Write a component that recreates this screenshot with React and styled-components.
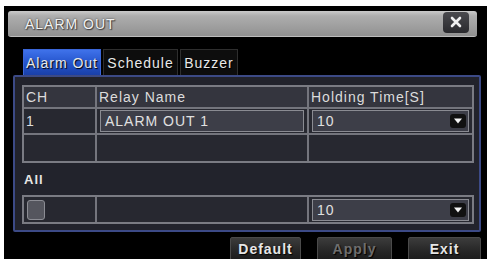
import React from "react";
import styled, { createGlobalStyle } from "styled-components";

const GlobalStyle = createGlobalStyle`
  html, body {
    margin: 0;
    padding: 0;
    background: #ffffff;
  }
  body {
    font-family: "Liberation Sans", Arimo, Arial, sans-serif;
    font-size: 14px;
  }
`;

const Dialog = styled.div`
  box-sizing: border-box;
  margin: 6px 0 0 4px;
  width: 483px;
  height: 253px;
  overflow: hidden;
  background: #000;
  padding: 5px 5px 0 4px;
  font-family: "Liberation Sans", Arimo, Arial, sans-serif;
`;

const TitleBar = styled.div`
  box-sizing: border-box;
  width: 469px;
  height: 26px;
  display: flex;
  align-items: center;
  justify-content: space-between;
  padding: 0 8px 0 17px;
  border-radius: 3px;
  background: linear-gradient(#cacaca 0%, #adadad 20%, #9c9c9c 70%, #909090 100%);
  border-bottom: 1px solid #bcbcbc;
`;

const Title = styled.span`
  color: #f2f2f2;
  letter-spacing: 1px;
  text-shadow: 0 0 2px #333, 1px 1px 1px #444;
`;

const CloseButton = styled.div`
  width: 26px;
  height: 21px;
  margin-top: -3px;
  border-radius: 4px;
  background: linear-gradient(#4a4a4e, #2a2a2e);
  display: flex;
  align-items: center;
  justify-content: center;
`;

const Tabs = styled.div`
  display: flex;
  gap: 2px;
  margin: 12px 0 0 15px;
  height: 26px;
`;

const Tab = styled.div`
  box-sizing: border-box;
  width: ${(p) => p.$w}px;
  height: 26px;
  display: flex;
  align-items: center;
  justify-content: center;
  white-space: nowrap;
  color: #e8e8e8;
  letter-spacing: 1px;
  text-shadow: 1px 1px 1px #000;
  border: 1px solid ${(p) => (p.$active ? "#3a66d8" : "#2e2e2e")};
  border-bottom: none;
  background: ${(p) =>
    p.$active ? "linear-gradient(#3f72ea, #2150c8 60%, #1a40a8)" : "#0d0d0d"};
`;

const Panel = styled.div`
  box-sizing: border-box;
  margin-left: 5px;
  width: 468px;
  height: 157px;
  border: 2px solid #3c4a86;
  border-radius: 2px;
  background: #22232c;
  padding: 8px 5px 0 7px;
`;

const Table = styled.div`
  display: grid;
  grid-template-columns: 71px 210px 1fr;
  grid-template-rows: ${(p) => p.$rows};
  gap: 2px;
  background: #74757d;
  border: 2px solid #7a7b83;
  width: 452px;
  box-sizing: border-box;
`;

const Cell = styled.div`
  display: flex;
  align-items: center;
  padding: 0 ${(p) => (p.$box ? 3 : 2)}px;
  color: #dcdcdc;
  letter-spacing: 1px;
  white-space: nowrap;
  background: ${(p) => (p.$head ? "#34353e" : "#272830")};
`;

const TextBox = styled.div`
  box-sizing: border-box;
  flex: 1;
  height: 22px;
  display: flex;
  align-items: center;
  padding-left: 4px;
  background: #3d3e48;
  border: 1px solid #8a8b92;
  color: #e0e0e0;
  letter-spacing: 1px;
`;

const SelectBox = styled(TextBox)`
  justify-content: space-between;
  padding-right: 2px;
`;

const Arrow = styled.div`
  width: 16px;
  height: 14px;
  border-radius: 3px;
  background: #111;
  display: flex;
  align-items: center;
  justify-content: center;
`;

const AllLabel = styled.div`
  height: 32px;
  display: flex;
  align-items: center;
  padding-left: 2px;
  color: #e6e6e6;
  font-weight: bold;
  font-size: 13px;
  letter-spacing: 1px;
`;

const Check = styled.div`
  width: 16px;
  height: 18px;
  border-radius: 3px;
  background: #55565e;
  border: 1px solid #8c8d94;
`;

const ButtonRow = styled.div`
  display: flex;
  justify-content: flex-end;
  gap: 16px;
  margin-top: 5px;
  padding-right: 1px;
`;

const Button = styled.div`
  box-sizing: border-box;
  width: ${(p) => p.$w}px;
  height: 24px;
  display: flex;
  align-items: center;
  justify-content: center;
  border: 1px solid #4a4a4a;
  border-radius: 2px;
  background: linear-gradient(#3c3c3c, #262626 60%, #1c1c1c);
  color: ${(p) => (p.$disabled ? "#6e6e6e" : "#e6e6e6")};
  font-weight: bold;
  letter-spacing: 1px;
  text-shadow: 1px 1px 1px #000;
`;

const DownArrow = () => (
  <Arrow>
    <svg width="10" height="8" viewBox="0 0 10 8">
      <path d="M1 1.5 H9 L5 6.5 Z" fill="#f4f4f4" />
    </svg>
  </Arrow>
);

const Select = ({ value }) => (
  <SelectBox>
    {value}
    <DownArrow />
  </SelectBox>
);

export default function App() {
  return (
    <>
      <GlobalStyle />
      <Dialog>
        <TitleBar>
          <Title>ALARM OUT</Title>
          <CloseButton>
            <svg width="12" height="12" viewBox="0 0 12 12">
              <path d="M2 2 L10 10 M10 2 L2 10" stroke="#f0f0f0" strokeWidth="2.6" strokeLinecap="round" />
            </svg>
          </CloseButton>
        </TitleBar>
        <Tabs>
          <Tab $w={78} $active>Alarm Out</Tab>
          <Tab $w={75}>Schedule</Tab>
          <Tab $w={58}>Buzzer</Tab>
        </Tabs>
        <Panel>
          <Table $rows="20px 24px 26px">
            <Cell $head>CH</Cell>
            <Cell $head>Relay Name</Cell>
            <Cell $head>Holding Time[S]</Cell>
            <Cell>1</Cell>
            <Cell $box>
              <TextBox>ALARM OUT 1</TextBox>
            </Cell>
            <Cell $box>
              <Select value="10" />
            </Cell>
            <Cell />
            <Cell />
            <Cell />
          </Table>
          <AllLabel>All</AllLabel>
          <Table $rows="25px">
            <Cell $box>
              <Check />
            </Cell>
            <Cell />
            <Cell $box>
              <Select value="10" />
            </Cell>
          </Table>
        </Panel>
        <ButtonRow>
          <Button $w={71}>Default</Button>
          <Button $w={75} $disabled>Apply</Button>
          <Button $w={73}>Exit</Button>
        </ButtonRow>
      </Dialog>
    </>
  );
}
